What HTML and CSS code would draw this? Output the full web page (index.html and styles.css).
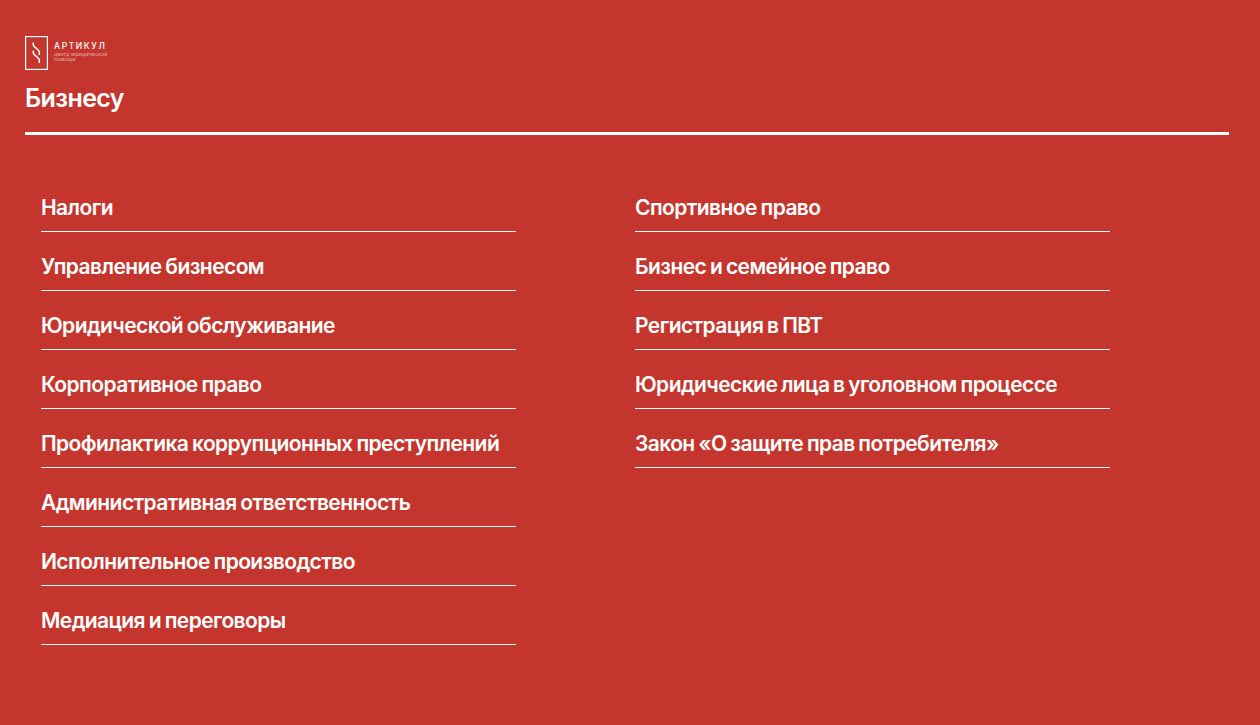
FILE: index.html
```
<!DOCTYPE html>
<html lang="ru">
<head>
<meta charset="utf-8">
<title>Бизнесу</title>
<link rel="stylesheet" href="styles.css">
</head>
<body>
<header class="head">
  <div class="logo">
    <svg class="logo-mark" width="23" height="34" viewBox="0 0 23 34" fill="none" stroke="#fff">
      <rect x="0.600" y="0.600" width="21.800" height="32.800" stroke-width="1.200"/>
      <path d="M8.500 6.500c-1.500 3 1 4.500 3 6s4 3.500 2.500 6.500" stroke-width="1.500"/>
      <path d="M8.500 14.500c-1.500 3 1 4.500 3 6s4 3.500 2.500 6.500" stroke-width="1.500"/>
    </svg>
    <div class="logo-text">
      <div class="logo-name">АРТИКУЛ</div>
      <div class="logo-sub">центр юридической<br>помощи</div>
    </div>
  </div>
  <h1 class="title">Бизнесу</h1>
</header>
<main class="cols">
  <ul class="list">
    <li class="item">Налоги</li>
    <li class="item">Управление бизнесом</li>
    <li class="item">Юридической обслуживание</li>
    <li class="item">Корпоративное право</li>
    <li class="item">Профилактика коррупционных преступлений</li>
    <li class="item">Административная ответственность</li>
    <li class="item">Исполнительное производство</li>
    <li class="item">Медиация и переговоры</li>
  </ul>
  <ul class="list">
    <li class="item">Спортивное право</li>
    <li class="item">Бизнес и семейное право</li>
    <li class="item">Регистрация в ПВТ</li>
    <li class="item">Юридические лица в уголовном процессе</li>
    <li class="item">Закон «О защите прав потребителя»</li>
  </ul>
</main>
</body>
</html>
```
FILE: styles.css
```
* { box-sizing: border-box; }
html, body { margin: 0; height: 100%; }
body {
  background: #c4362d;
  color: #fff;
  font-family: Inter, "Noto Sans", sans-serif;
  overflow: hidden;
}
.head {
  margin: 0 31px 0 25px;
  padding-top: 36px;
  height: 135px;
  border-bottom: 3px solid #fff;
}
.logo { display: flex; align-items: flex-start; gap: 6px; height: 34px; }
.logo-mark { display: block; }
.logo-text { padding-top: 5px; }
.logo-name { font-size: 8.500px; line-height: 11px; font-weight: 500; letter-spacing: 1.600px; }
.logo-sub { font-size: 5px; line-height: 5px; font-weight: 300; letter-spacing: 0.300px; opacity: 0.75; }
.title {
  margin: 13px 0 0;
  font-size: 25px;
  line-height: 30px;
  font-weight: 600;
  letter-spacing: -0.600px;
}
.cols { display: flex; gap: 119px; padding: 38px 0 0 41px; }
.list { list-style: none; margin: 0; padding: 0; width: 475px; }
.item {
  height: 59px;
  padding-top: 23px;
  font-size: 21px;
  line-height: 24px;
  font-weight: 600;
  letter-spacing: -0.580px;
  word-spacing: -1px;
  border-bottom: 1px solid #fff;
  white-space: nowrap;
}
```
